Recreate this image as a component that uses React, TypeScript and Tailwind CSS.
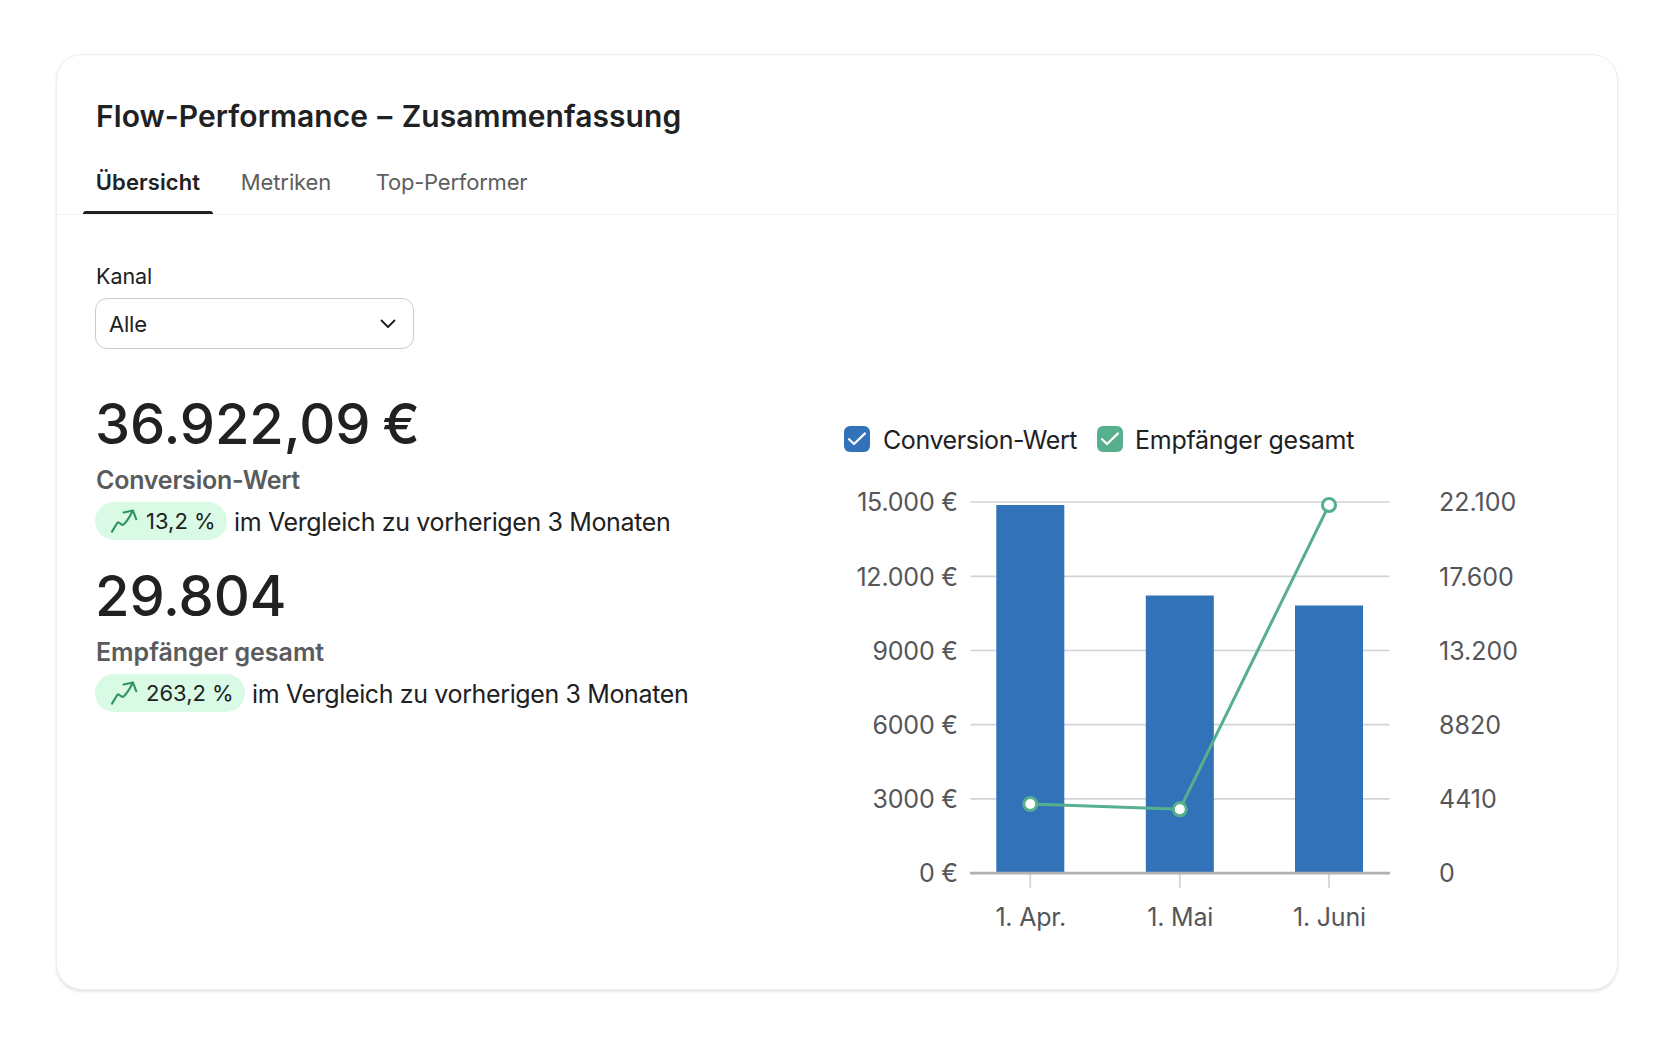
import { useState } from "react"

const bars = [
  { label: "1. Apr.", x: 1030.3, top: 505, point: 804 },
  { label: "1. Mai", x: 1179.8, top: 595.5, point: 809.3 },
  { label: "1. Juni", x: 1329, top: 605.5, point: 505 },
]

const ticks = [
  { y: 502, left: "15.000 €", right: "22.100" },
  { y: 576.3, left: "12.000 €", right: "17.600" },
  { y: 650.5, left: "9000 €", right: "13.200" },
  { y: 724.7, left: "6000 €", right: "8820" },
  { y: 798.9, left: "3000 €", right: "4410" },
  { y: 873.1, left: "0 €", right: "0" },
]

const tabs = [
  { name: "Übersicht", className: "w-[130px] tracking-[0.1px]" },
  { name: "Metriken", className: "w-[122px] tracking-[-0.1px]" },
  { name: "Top-Performer", className: "w-[185px] tracking-[-0.2px]" },
]

const stats = [
  { value: "36.922,09 €", label: "Conversion-Wert", change: "13,2 %", pill: "w-[132px]", spacing: "tracking-[-0.22px]" },
  { value: "29.804", label: "Empfänger gesamt", change: "263,2 %", pill: "w-[150px]", spacing: "tracking-[-0.03px]" },
]

function TrendIcon() {
  return (
    <svg width="28" height="24" viewBox="0 0 28 24" fill="none" stroke="#2f9463" strokeWidth="2.1" strokeLinecap="round" strokeLinejoin="round">
      <path d="M2 22.6L7.2 14Q7.8 13 8.8 13.6L11.8 15.6Q12.8 16.2 13.8 15.2C17.4 11.8 20 7.4 22.4 2.2M13.6 3.6L22.9 1.4L26.2 10.2" />
    </svg>
  )
}

function Check({ className }: { className: string }) {
  return (
    <span className={`flex h-[26px] w-[26px] items-center justify-center rounded-[6px] ${className}`}>
      <svg width="20" height="16" viewBox="0 0 20 16" fill="none" stroke="white" strokeWidth="2.2" strokeLinecap="round" strokeLinejoin="round">
        <path d="M2 8.2L7 13L18 2.4" />
      </svg>
    </span>
  )
}

function Chart() {
  return (
    <svg className="block" width="720" height="460" viewBox="840 480 720 460" fontSize="25" fill="#555659">
      {ticks.map((t) => (
        <g key={t.y}>
          {t.y < 870 && <path d={`M970.5 ${t.y}H1389.5`} stroke="#d0d3d7" strokeWidth="1.7" />}
          <text x="957.8" y={t.y + 9.2} textAnchor="end" letterSpacing="-0.2">{t.left}</text>
          <text x="1439" y={t.y + 9.2}>{t.right}</text>
        </g>
      ))}
      {bars.map((b) => (
        <g key={b.label}>
          <rect x={b.x - 34} y={b.top} width="68" height={873 - b.top} fill="#3272b9" />
          <path d={`M${b.x} 874V888`} stroke="#d0d3d7" strokeWidth="1.7" />
          <text x={b.x + 0.4} y="926.4" textAnchor="middle" letterSpacing="-0.2">{b.label}</text>
        </g>
      ))}
      <path d="M970 873.1H1390" stroke="#aeb0b3" strokeWidth="2.8" />
      <polyline points={bars.map((b) => `${b.x},${b.point}`).join(" ")} fill="none" stroke="#56b08d" strokeWidth="3" />
      {bars.map((b) => (
        <circle key={b.label} cx={b.x} cy={b.point} r="6.5" fill="white" stroke="#56b08d" strokeWidth="3" />
      ))}
    </svg>
  )
}

export default function App() {
  const [active, setActive] = useState("Übersicht")

  return (
    <div className="h-[1048px] w-[1674px] bg-white px-14 pt-[54px] font-['Inter',sans-serif] text-[#202123]">
      <div className="h-[936px] w-[1562px] rounded-[26px] border-[1.5px] border-[#ededed] bg-white shadow-[0_2px_3px_rgba(0,0,0,0.1)]">
        <h1 className="pt-[39px] pl-[39px] text-[30px] leading-[44px] font-semibold tracking-[0.07px] [word-spacing:1.6px]">
          Flow-Performance – Zusammenfassung
        </h1>

        <nav className="mt-[7px] flex h-[70px] border-b-[1.5px] border-[#f0f0f0] pl-[26px] text-[22px]">
          {tabs.map((tab) => (
            <button
              key={tab.name}
              onClick={() => setActive(tab.name)}
              className={`relative mr-[12px] pt-[6px] text-center whitespace-nowrap ${tab.className} ${active === tab.name ? "font-semibold" : "text-[#5d5e60]"}`}
            >
              {tab.name}
              {active === tab.name && <span className="absolute bottom-0 left-0 h-[3px] w-full rounded-t-[3px] bg-[#202123]" />}
            </button>
          ))}
        </nav>

        <div className="flex">
          <section className="w-[787px] pt-[46px] pl-[38px]">
            <p className="pl-px text-[21.5px] leading-[30px] tracking-[-0.05px]">Kanal</p>
            <button className="mt-[7px] flex h-[51px] w-[319px] items-center justify-between rounded-[12px] border-[1.5px] border-[#c9cccf] pt-px pr-[17px] pl-[13px] text-[22px] tracking-[-0.2px]">
              Alle
              <svg width="16" height="10" viewBox="0 0 16 10" fill="none" stroke="#202123" strokeWidth="1.9" strokeLinecap="round" strokeLinejoin="round">
                <path d="M1.5 1.5L8 8L14.5 1.5" />
              </svg>
            </button>
            <div className="mt-[42px]">
              {stats.map((s) => (
                <div key={s.label} className="h-[172px]">
                  <p className="text-[56px] leading-[66px] font-medium tracking-[-0.1px] [word-spacing:-3px]">{s.value}</p>
                  <p className={`mt-[6px] pl-px text-[25px] leading-[34px] font-semibold text-[#5a5b5d] ${s.spacing}`}>{s.label}</p>
                  <div className="mt-1 flex items-center gap-[7px]">
                    <span className={`flex h-[38px] items-center gap-2 rounded-full bg-[#d9fae4] pl-[15px] text-[22px] whitespace-nowrap ${s.pill}`}>
                      <TrendIcon />
                      {s.change}
                    </span>
                    <span className="pt-[3px] text-[25px] tracking-[-0.37px] whitespace-nowrap">im Vergleich zu vorherigen 3 Monaten</span>
                  </div>
                </div>
              ))}
            </div>
          </section>

          <section className="pt-[204px]">
            <div className="flex h-[40px] items-center text-[25px] whitespace-nowrap">
              <Check className="bg-[#3272b9]" />
              <span className="ml-[13px] w-[214px] pt-[3px] tracking-[-0.42px]">Conversion-Wert</span>
              <Check className="bg-[#56b08d]" />
              <span className="ml-[12px] pt-[3px] tracking-[-0.27px]">Empfänger gesamt</span>
            </div>
            <div className="-ml-1 mt-[21px]">
              <Chart />
            </div>
          </section>
        </div>
      </div>
    </div>
  )
}
